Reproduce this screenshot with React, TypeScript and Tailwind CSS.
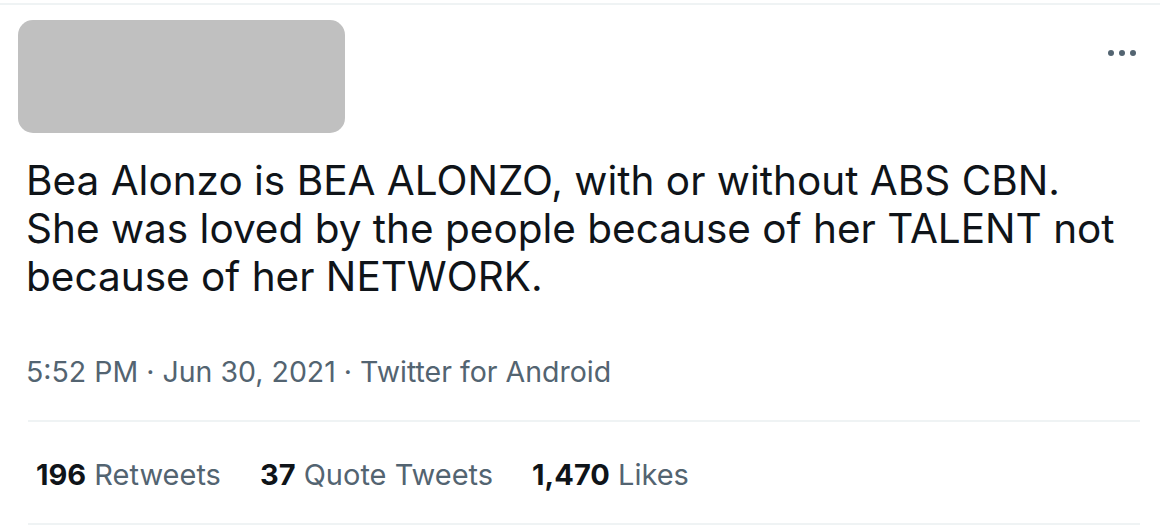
import React from 'react';

const font = { fontFamily: 'Inter, "Liberation Sans", Arial, sans-serif' };

function Stat({ value, label }: { value: string; label: string }) {
  return (
    <span className="whitespace-nowrap">
      <span className="font-bold text-[#0f1419]">{value}</span>{' '}
      <span className="text-[#536471]">{label}</span>
    </span>
  );
}

export default function App() {
  return (
    <div className="w-[1160px] h-[528px] bg-white overflow-hidden" style={font}>
      <div className="h-[3px]" />
      <div className="h-[2px] bg-[#eff3f4]" />

      {/* header: blurred user + menu */}
      <div className="flex items-start justify-between pl-[18px] pr-[24px] pt-[15px]">
        <div className="w-[327px] h-[113px] rounded-[15px] bg-[#c0c0c0]" />
        <div className="flex gap-[5px] mt-[30px]">
          <span className="w-[6px] h-[6px] rounded-full bg-[#536471]" />
          <span className="w-[6px] h-[6px] rounded-full bg-[#536471]" />
          <span className="w-[6px] h-[6px] rounded-full bg-[#536471]" />
        </div>
      </div>

      {/* tweet text */}
      <p className="pl-[26px] mt-[24px] text-[40.5px] leading-[48px] text-[#0f1419] whitespace-nowrap">
        Bea Alonzo is BEA ALONZO, with or without ABS CBN.
        <br />
        She was loved by the people because of her TALENT not
        <br />
        because of her NETWORK.
      </p>

      {/* timestamp */}
      <div className="pl-[26px] mt-[53px] text-[28.5px] leading-[36px] text-[#536471] whitespace-nowrap">
        5:52 PM · Jun 30, 2021 · Twitter for Android
      </div>

      <div className="ml-[28px] mr-[20px] mt-[30px] h-[2px] bg-[#eff3f4]" />

      {/* stats */}
      <div className="flex gap-[39px] pl-[36px] pt-[5px] h-[101px] items-center text-[29px] leading-[36px]">
        <Stat value="196" label="Retweets" />
        <Stat value="37" label="Quote Tweets" />
        <Stat value="1,470" label="Likes" />
      </div>

      <div className="ml-[28px] mr-[20px] h-[2px] bg-[#eff3f4]" />
    </div>
  );
}
